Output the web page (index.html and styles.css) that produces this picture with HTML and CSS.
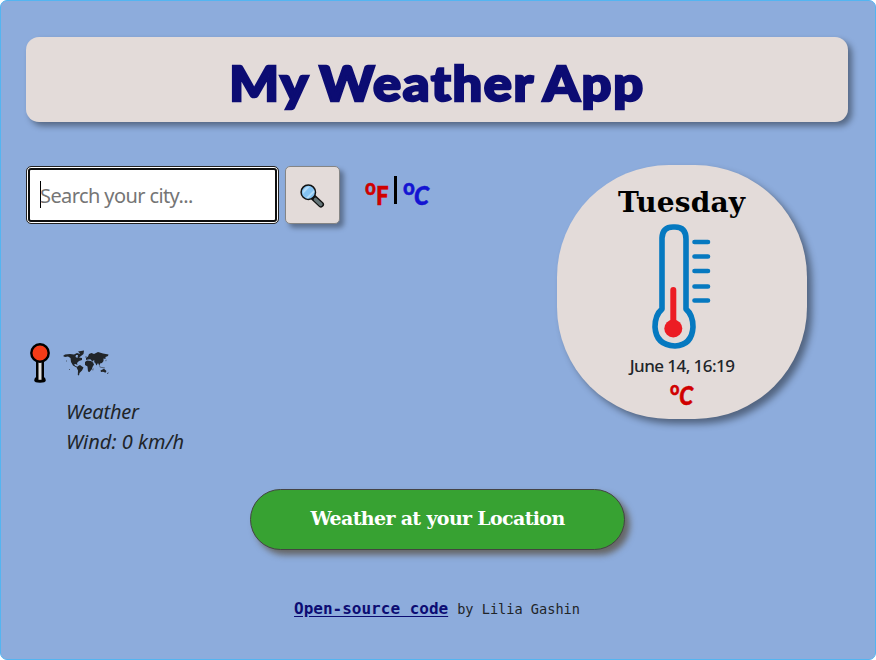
FILE: index.html
```html
<!DOCTYPE html>
<html lang="en">
<head>
<meta charset="utf-8">
<title>My Weather App</title>
<link rel="stylesheet" href="styles.css">
</head>
<body>
<main class="app">
  <header class="title"><h1>My Weather App</h1></header>
  <div class="content">
    <section class="left">
      <form class="search">
        <div class="field"><span class="caret"></span><span class="placeholder">Search your city...</span></div>
        <button class="go" type="button" aria-label="Search">
          <svg width="26" height="26" viewBox="0 0 26 26">
            <path d="M14.5 14.5 22 21.5" stroke="#111" stroke-width="6" stroke-linecap="round"/>
            <path d="M16.5 16.5 21.8 21.3" stroke="#647477" stroke-width="3.6" stroke-linecap="round"/>
            <circle cx="9.3" cy="9.2" r="7.2" fill="#85c3f2" stroke="#111" stroke-width="1.5"/>
            <path d="M4 11 11 3.5A6.4 6.4 0 0 0 4 11ZM7 15 15 7 15.5 9 9 15.5Z" fill="#b4dcf8"/>
          </svg>
        </button>
        <div class="units"><span class="unit red"><span class="deg">o</span>F</span><span class="bar"></span><span class="unit blue"><span class="deg">o</span><i>C</i></span></div>
      </form>
      <div class="place">
        <svg width="22" height="42" viewBox="0 0 22 42">
          <path d="M7 18V34Q5.2 35 5.2 37.500Q5.500 39.700 11 39.700T16.800 37.500Q16.800 35 15 34V18Z" fill="#000"/>
          <path d="M9.500 18V36.800H12.500V18Z" fill="#dedede"/>
          <circle cx="11" cy="10" r="8.7" fill="#f43b18" stroke="#000" stroke-width="2.4"/>
        </svg>
        <svg class="map" width="48" height="26" viewBox="0 0 48 26">
          <path fill="#212529" d="M1 6 3 4.5 8 4 12 4.5 15 3 18 4 19 6 17 7.5 20 8 20 10 17 11 15 13 15.5 15 13.5 14 12 14.5 13.5 16 16 17 14.5 17.5 11 15.5 9 12 8.5 8 6 6.5 3 7ZM16 1.5 22 .5 21.5 4 19 6 17.5 3ZM16 16 18 15 21.5 17.5 20 20.5 17.500 23 17 25.500 15.800 25 16 20.500 14.800 18ZM23 12 25 10.500 29 11 31 12.500 32 14.500 30.500 17 30 19 27.500 22 26 21.500 25.500 16.500 23 15ZM24 10 24 8 26 6.500 27 4 29.500 3 32 4 36 2 41 3.500 46.500 4.500 46 6 43.500 7 43.500 9 41.500 8.500 41.500 11 40 13 38 13.500 37.500 16 36 13 34.500 15.500 33 12.500 31 12 29 10 26 9.500ZM30.500 19.500 31.500 18 31 21ZM38.500 20.500 42 18.800 44.500 21 43.500 22.800 41 21.800 39 22ZM45 23.500 46.500 22 46 24ZM43.500 10.500 44.500 9.500 44 11.500Z"/>
          <path fill="#212529" opacity=".6" d="M37 16 39.500 17 43 17.500 42.500 18.500 38 17.500ZM4 10.500H5V11.500H4ZM7 19H8V20H7ZM23.500 6H24.500V8H23.500Z"/>
          <path fill="#8dacdc" d="M14 5 16 5 15.500 8 13.500 7ZM31 10.500 32.500 10.500 32 12.500 30.500 11.500ZM26 9 29 9.500 28.500 10.300Z"/>
        </svg>
      </div>
      <div class="facts"><div class="weather">Weather</div><div class="wind">Wind: 0 km/h</div></div>
    </section>
    <section class="card">
      <h2>Tuesday</h2>
      <svg class="thermo" width="62" height="126" viewBox="0 0 62 126">
        <path d="M10 85V14Q10.500 3 21 3H23Q34 3 34 15V85Q41 91 41 103Q40 121 23 122Q4 121 3 103Q3 91 10 85Z" fill="none" stroke="#0679c0" stroke-width="5.600" stroke-linejoin="round"/>
        <path d="M21.300 104V66" stroke="#ec1c24" stroke-width="6" stroke-linecap="round"/>
        <circle cx="21.300" cy="104.500" r="9" fill="#ec1c24"/>
        <path d="M42.500 18H56M42.500 32.500H56M42.500 47H56M42.500 62.500H56M42.500 76.500H56" stroke="#0679c0" stroke-width="4.600" stroke-linecap="round"/>
      </svg>
      <div class="date">June 14, 16:19</div>
      <div class="unit small"><span class="deg">o</span><i>C</i></div>
    </section>
  </div>
  <button class="locate" type="button">Weather at your Location</button>
  <footer><a href="#">Open-source code</a><span class="by">by Lilia Gashin</span></footer>
</main>
</body>
</html>
```
FILE: styles.css
```css
* { box-sizing: border-box; }
body { margin: 0; background: #fff; color: #212529; font-family: "Open Sans", "Noto Sans", sans-serif; }
.app { width: 876px; height: 660px; padding: 36px 27px 0 25px; background: #8dacdc; border: 1px solid #53b5f1; border-radius: 7px; }
.title { height: 85px; border-radius: 13px; background: #e3dbd9; box-shadow: 4px 4px 6px rgba(0,0,0,.4); text-align: center; }
h1 { margin: 0; font: 900 48px/92px Lato, sans-serif; color: #0c0c73; white-space: nowrap; letter-spacing: 1.6px; word-spacing: -3px; -webkit-text-stroke: 2.4px #0c0c73; transform: scaleX(1.09); }
.content { display: flex; justify-content: space-between; margin-top: 43px; padding-right: 41px; height: 254px; }
.left { width: 430px; }
.search { display: flex; align-items: flex-start; padding-top: 1px; }
.field { width: 253px; height: 58px; display: flex; align-items: center; padding-left: 11px; background: #fff; border: 1px solid #222; border-radius: 5px; box-shadow: inset 0 0 0 1px #fff, inset 0 0 0 3px #101010; }
.caret { width: 1px; height: 27px; margin: -2px 0 0 2px; background: #000; }
.placeholder { margin: 2px 0 0 -1px; color: #757575; font: 20px/30px "Noto Sans", sans-serif; letter-spacing: -.6px; }
.go { width: 55px; height: 58px; margin-left: 6px; padding: 1px 0 0; border: 1px solid #858585; border-radius: 5px; background: #e3dbd9; box-shadow: 4px 4px 5px rgba(0,0,0,.35); }
.go svg { display: block; margin: 0 0 0 13px; }
.units { display: flex; margin: 9px 0 0 25px; }
.unit { display: flex; font: 900 26px/40px Lato, sans-serif; transform: scaleX(.86); transform-origin: left; -webkit-text-stroke: .5px; }
.deg { font-size: 22px; line-height: 24px; }
.red { width: 29px; color: #d00000; }
.blue { color: #1414d2; transform: scaleX(.93); }
.blue i { margin-left: -1px; }
.bar { width: 3px; height: 28px; margin: 1px 6px 0 0; background: #000; }
.place { display: flex; align-items: flex-start; margin: 119px 0 0 3px; height: 49px; }
.map { margin: 7px 0 0 11px; }
.facts { margin: 5px 0 0 40px; font: italic 20px/30px "Noto Sans", sans-serif; white-space: nowrap; }
.weather { letter-spacing: -.2px; }
.wind { letter-spacing: 0; }
.card { width: 250px; height: 254px; display: flex; flex-direction: column; align-items: center; border-radius: 112px; background: #e3dbd9; box-shadow: 5px 5px 7px rgba(0,0,0,.42); }
h2 { margin: 18px 1px 0 0; font: bold 28px/40px "DejaVu Serif", serif; color: #000; letter-spacing: .15px; }
.thermo { margin: 1px 0 0 1px; flex: none; }
.date { margin-top: 3px; font: 500 17px/26px "Noto Sans", sans-serif; letter-spacing: -.56px; }
.small { color: #d00000; font-size: 26px; line-height: 33px; height: 34px; transform-origin: center; }
.small .deg { font-size: 19px; line-height: 17px; }
.locate { display: block; width: 375px; height: 61px; margin: 70px 0 0 224px; padding: 0 0 4px; border: 1px solid #444; border-radius: 31px; background: #37a232; color: #fff; box-shadow: 5px 5px 6px #666; font: bold 19px "DejaVu Serif", serif; letter-spacing: -.65px; white-space: nowrap; }
footer { display: flex; justify-content: center; align-items: baseline; gap: 9px; margin-top: 45px; font: 13.6px/28px "DejaVu Sans Mono", monospace; white-space: nowrap; }
footer a { color: #0c0c73; font-size: 16px; font-weight: bold; text-underline-offset: 2px; }
```
